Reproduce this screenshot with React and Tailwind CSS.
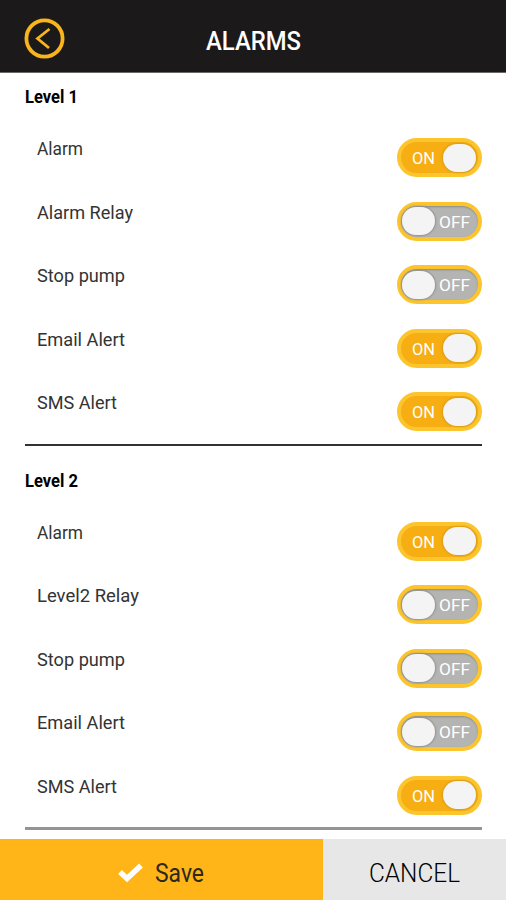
const sections = [
  {
    title: 'Level 1',
    spacing: 'h-[53px] pt-3',
    divider: 'h-0.5 bg-[#323134]',
    items: [
      { label: 'Alarm', on: true, width: 46 },
      { label: 'Alarm Relay', on: false, width: 96 },
      { label: 'Stop pump', on: false, width: 88 },
      { label: 'Email Alert', on: true, width: 88 },
      { label: 'SMS Alert', on: true, width: 80 },
    ],
  },
  {
    title: 'Level 2',
    spacing: 'h-16 pt-[23px]',
    divider: 'h-[3px] bg-[#949496]',
    items: [
      { label: 'Alarm', on: true, width: 46 },
      { label: 'Level2 Relay', on: false, width: 102 },
      { label: 'Stop pump', on: false, width: 88 },
      { label: 'Email Alert', on: false, width: 88 },
      { label: 'SMS Alert', on: true, width: 80 },
    ],
  },
]

// Text stretched to an exact width, so that rows keep the narrow gothic look
function FitText({ children, width, height, size, className = '' }) {
  return (
    <svg width={width} height={height} className={`block overflow-visible ${className}`}>
      <text
        x="0"
        y={height - 5}
        fontSize={size}
        textLength={width}
        lengthAdjust="spacingAndGlyphs"
        fill="currentColor"
      >
        {children}
      </text>
    </svg>
  )
}

function Toggle({ on }) {
  return (
    <button
      type="button"
      role="switch"
      aria-checked={on}
      className={`flex h-[39px] w-[85px] items-center rounded-full border-4 border-[#fcc52d] ${
        on
          ? 'justify-end bg-[#f6ae12] pr-0.5'
          : 'justify-start bg-[#b4b4b3] pl-px shadow-[inset_0_1px_2px_#8f8b80]'
      }`}
    >
      {on && <FitText width={23} height={23} size={17} className="mr-2 text-white">ON</FitText>}
      <span
        className={`h-[28px] w-[33px] shrink-0 rounded-[14px] bg-[#f4f4f4] ${
          on ? 'shadow-[0_0_2px_1px_#d99a18]' : 'shadow-[0_0_2px_1px_#92918e]'
        }`}
      />
      {!on && <FitText width={31} height={23} size={17} className="ml-1 text-white">OFF</FitText>}
    </button>
  )
}

export default function App() {
  return (
    <div className="flex h-[900px] w-[506px] flex-col overflow-hidden bg-white font-['Roboto',sans-serif] text-[#333]">
      {/* Header */}
      <header className="flex h-[73px] shrink-0 items-center border-b border-[#69696a] bg-[#1b191a] pt-1">
        <button type="button" aria-label="Back" className="ml-6 shrink-0">
          <svg width="41" height="41" viewBox="0 0 41 41" fill="none" stroke="#fab51c" className="block">
            <circle cx="20.5" cy="20.5" r="18.1" strokeWidth="3.8" />
            <path d="M25.5 11 L13.5 20.5 L25 30" strokeWidth="2.8" />
          </svg>
        </button>
        <h1 className="ml-[141px] pt-1 text-white">
          <FitText width={95} height={29} size={26} className="font-medium">ALARMS</FitText>
        </h1>
      </header>

      {/* Alarm settings */}
      <main className="flex h-[766px] shrink-0 flex-col pr-6 pl-[25px]">
        {sections.map((section) => (
          <section key={section.title}>
            <h2 className={`${section.spacing} text-black`}>
              <FitText width={53} height={23} size={18} className="font-bold">{section.title}</FitText>
            </h2>
            <ul>
              {section.items.map((item) => (
                <li key={item.label} className="flex h-[63.5px] justify-between pt-3 pl-3">
                  <FitText width={item.width} height={22} size={19} className="text-[#333]">
                    {item.label}
                  </FitText>
                  <Toggle on={item.on} />
                </li>
              ))}
            </ul>
            <div className={section.divider} />
          </section>
        ))}
      </main>

      {/* Footer */}
      <footer className="flex h-[61px] shrink-0">
        <button type="button" className="flex w-[323px] items-center bg-[#ffb517] pt-1.5 pl-[118px] text-[#2d2820]">
          <svg width="25" height="20" viewBox="0 0 25 20" fill="none" stroke="white" strokeWidth="5.4" className="mr-3">
            <path d="M2 9 L9 15.5 L23 2.5" />
          </svg>
          <FitText width={49} height={29} size={26}>Save</FitText>
        </button>
        <button type="button" className="flex flex-1 items-center bg-[#e7e7e7] pt-1.5 pl-[46px]">
          <FitText width={91} height={29} size={26} className="font-light text-black">CANCEL</FitText>
        </button>
      </footer>
    </div>
  )
}
